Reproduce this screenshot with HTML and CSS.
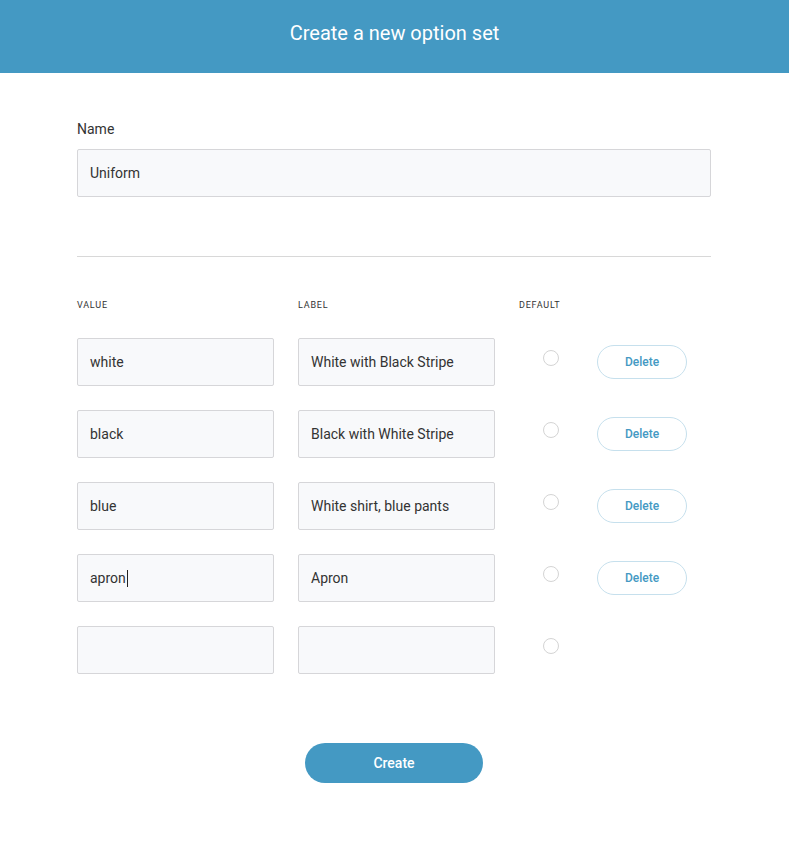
FILE: index.html
```html
<!DOCTYPE html>
<html>
<head>
<meta charset="utf-8">
<link rel="stylesheet" href="styles.css">
</head>
<body>
<header class="topbar"><h1 class="title">Create a new option set</h1></header>
<main class="content">
  <label class="field-label">Name</label>
  <div class="input wide">Uniform</div>
  <hr class="divider">
  <div class="grid">
    <div class="col-head">Value</div>
    <div class="col-head">Label</div>
    <div class="col-head">Default</div>
    <div></div>

    <div class="input">white</div>
    <div class="input">White with Black Stripe</div>
    <div class="radio-cell"><span class="radio"></span></div>
    <div class="btn-cell"><button class="delete">Delete</button></div>

    <div class="input">black</div>
    <div class="input">Black with White Stripe</div>
    <div class="radio-cell"><span class="radio"></span></div>
    <div class="btn-cell"><button class="delete">Delete</button></div>

    <div class="input">blue</div>
    <div class="input">White shirt, blue pants</div>
    <div class="radio-cell"><span class="radio"></span></div>
    <div class="btn-cell"><button class="delete">Delete</button></div>

    <div class="input">apron<span class="caret"></span></div>
    <div class="input">Apron</div>
    <div class="radio-cell"><span class="radio"></span></div>
    <div class="btn-cell"><button class="delete">Delete</button></div>

    <div class="input"></div>
    <div class="input"></div>
    <div class="radio-cell"><span class="radio"></span></div>
    <div></div>
  </div>
  <div class="actions"><button class="create">Create</button></div>
</main>
</body>
</html>
```
FILE: styles.css
```css
* { box-sizing: border-box; }
html, body { margin: 0; padding: 0; background: #fff; }
body { font-family: Roboto, "Noto Sans", sans-serif; color: #333; }

.topbar {
  height: 73px;
  background: #4499c3;
  display: flex;
  align-items: center;
  justify-content: center;
  padding-bottom: 8px;
}
.title {
  margin: 0;
  font-size: 20px;
  font-weight: 400;
  color: #fff;
  line-height: 24px;
}

.content {
  width: 634px;
  margin-left: 77px;
  padding-top: 48px;
}
.field-label {
  display: block;
  font-size: 14px;
  line-height: 16px;
  color: #333;
  margin-bottom: 12px;
}
.input {
  height: 48px;
  border: 1px solid #d6d6d9;
  border-radius: 2px;
  background: #f8f9fb;
  padding: 0 12px;
  display: flex;
  align-items: center;
  font-size: 14px;
  color: #333;
}
.caret {
  display: inline-block;
  width: 1px;
  height: 17px;
  background: #222;
  margin-left: 1px;
}
.divider {
  border: 0;
  border-top: 1px solid #d8d8d8;
  margin: 59px 0 0;
}
.grid {
  display: grid;
  grid-template-columns: 197px 197px 54px 90px;
  column-gap: 24px;
  row-gap: 24px;
  margin-top: 42px;
}
.col-head {
  font-size: 9px;
  line-height: 12px;
  text-transform: uppercase;
  letter-spacing: 0.8px;
  color: #333;
  margin-bottom: 3px;
}
.radio-cell {
  padding-top: 12px;
  padding-left: 24px;
}
.radio {
  display: block;
  width: 16px;
  height: 16px;
  border-radius: 50%;
  border: 1px solid #d4d4d4;
  background: #fff;
}
.btn-cell { padding-top: 7px; }
.delete {
  width: 90px;
  height: 34px;
  border: 1px solid #c6e0ed;
  border-radius: 17px;
  background: #fff;
  color: #4499c3;
  font-family: Roboto, sans-serif;
  font-size: 12px;
  font-weight: 500;
  cursor: pointer;
}
.actions {
  display: flex;
  justify-content: center;
  margin-top: 69px;
}
.create {
  width: 178px;
  height: 40px;
  border: 0;
  border-radius: 20px;
  background: #4499c3;
  color: #fff;
  font-family: Roboto, sans-serif;
  font-size: 14px;
  font-weight: 500;
  cursor: pointer;
}
```
